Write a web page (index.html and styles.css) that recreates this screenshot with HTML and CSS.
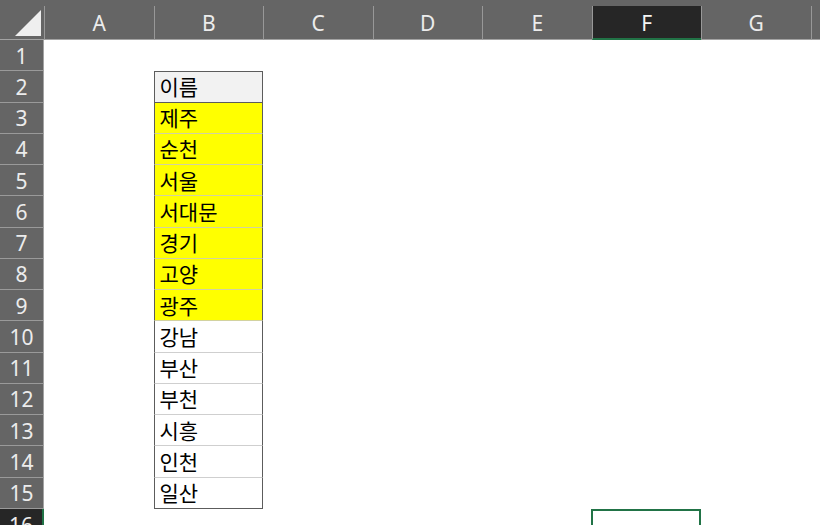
FILE: index.html
```html
<!DOCTYPE html>
<html lang="ko">
  <head>
    <meta charset="UTF-8" />
    <title>Sheet1</title>
    <link rel="stylesheet" href="styles.css">
  </head>
  <body>
    <div class="sheet">
      <!-- Column headers -->
      <div class="col-bar">
        <div class="corner">
          <svg width="44" height="40" viewBox="0 0 44 40"><polygon points="41,10 41,36 15,36" fill="#efefef" /></svg>
        </div>
        <div class="col-head">A</div>
        <div class="col-head">B</div>
        <div class="col-head">C</div>
        <div class="col-head">D</div>
        <div class="col-head">E</div>
        <div class="col-head active">F</div>
        <div class="col-head">G</div>
        <div class="col-head"></div>
      </div>

      <!-- Rows -->
      <div class="row"><div class="row-head">1</div></div>
      <div class="row"><div class="row-head">2</div><div class="cell"></div><div class="cell tbl tbl-head">이름</div></div>
      <div class="row"><div class="row-head">3</div><div class="cell"></div><div class="cell tbl hl">제주</div></div>
      <div class="row"><div class="row-head">4</div><div class="cell"></div><div class="cell tbl hl">순천</div></div>
      <div class="row"><div class="row-head">5</div><div class="cell"></div><div class="cell tbl hl">서울</div></div>
      <div class="row"><div class="row-head">6</div><div class="cell"></div><div class="cell tbl hl">서대문</div></div>
      <div class="row"><div class="row-head">7</div><div class="cell"></div><div class="cell tbl hl">경기</div></div>
      <div class="row"><div class="row-head">8</div><div class="cell"></div><div class="cell tbl hl">고양</div></div>
      <div class="row"><div class="row-head">9</div><div class="cell"></div><div class="cell tbl hl">광주</div></div>
      <div class="row"><div class="row-head">10</div><div class="cell"></div><div class="cell tbl">강남</div></div>
      <div class="row"><div class="row-head">11</div><div class="cell"></div><div class="cell tbl">부산</div></div>
      <div class="row"><div class="row-head">12</div><div class="cell"></div><div class="cell tbl">부천</div></div>
      <div class="row"><div class="row-head">13</div><div class="cell"></div><div class="cell tbl">시흥</div></div>
      <div class="row"><div class="row-head">14</div><div class="cell"></div><div class="cell tbl">인천</div></div>
      <div class="row"><div class="row-head">15</div><div class="cell"></div><div class="cell tbl tbl-last">일산</div></div>
      <div class="row">
        <div class="row-head active">16</div>
        <div class="cell"></div>
        <div class="cell"></div>
        <div class="cell"></div>
        <div class="cell"></div>
        <div class="cell"></div>
        <div class="cell selected"></div>
      </div>
    </div>
  </body>
</html>
```

FILE: styles.css
```css
* {
  margin: 0;
  padding: 0;
  box-sizing: border-box;
}

body,
html {
  width: 820px;
  height: 525px;
  overflow: hidden;
  background: #fff;
  font-family: "Noto Sans", "Open Sans", sans-serif;
}

.sheet {
  width: 820px;
}

.col-bar,
.row {
  display: grid;
  grid-template-columns: 44px repeat(7, 109.5px) 1fr;
}

.col-bar {
  height: 40px;
  background: #656565;
}

.corner {
  height: 40px;
  border-bottom: 1px solid #a3a3a3;
}

.corner svg {
  display: block;
}

.col-head {
  margin-top: 6px;
  height: 34px;
  border-left: 1px solid #989898;
  border-bottom: 1px solid #a3a3a3;
  color: #ececec;
  font-size: 21px;
  display: flex;
  align-items: center;
  justify-content: center;
  padding-top: 1px;
}

.col-head.active {
  background: #262626;
  border-bottom: 2px solid #217346;
  color: #f4f4f4;
}

.row {
  height: 31.25px;
}

.row-head {
  background: #656565;
  color: #ececec;
  font-size: 21px;
  border-right: 1px solid #a3a3a3;
  border-bottom: 1px solid #9a9a9a;
  display: flex;
  align-items: center;
  justify-content: center;
  padding-top: 1px;
}

.row-head.active {
  background: #262626;
  border-right: 2px solid #217346;
  border-bottom: none;
}

.cell {
  background: #fff;
}

.tbl {
  font-family: "Noto Sans CJK KR", sans-serif;
  font-size: 21px;
  color: #000;
  padding-left: 5px;
  display: flex;
  align-items: center;
  border-left: 1px solid #5c5c5c;
  border-right: 1px solid #5c5c5c;
  border-bottom: 1px solid #cfcfcf;
  line-height: 1;
}

.tbl-head {
  background: #f2f2f2;
  border-top: 1px solid #5c5c5c;
  border-bottom: 1px solid #5c5c5c;
}

.tbl.hl {
  background: #ffff00;
  border-bottom-color: #d2d2a0;
}

.tbl-last {
  border-bottom: 1px solid #5c5c5c;
}

.selected {
  border: 2px solid #217346;
  margin-left: -1px;
}
```
